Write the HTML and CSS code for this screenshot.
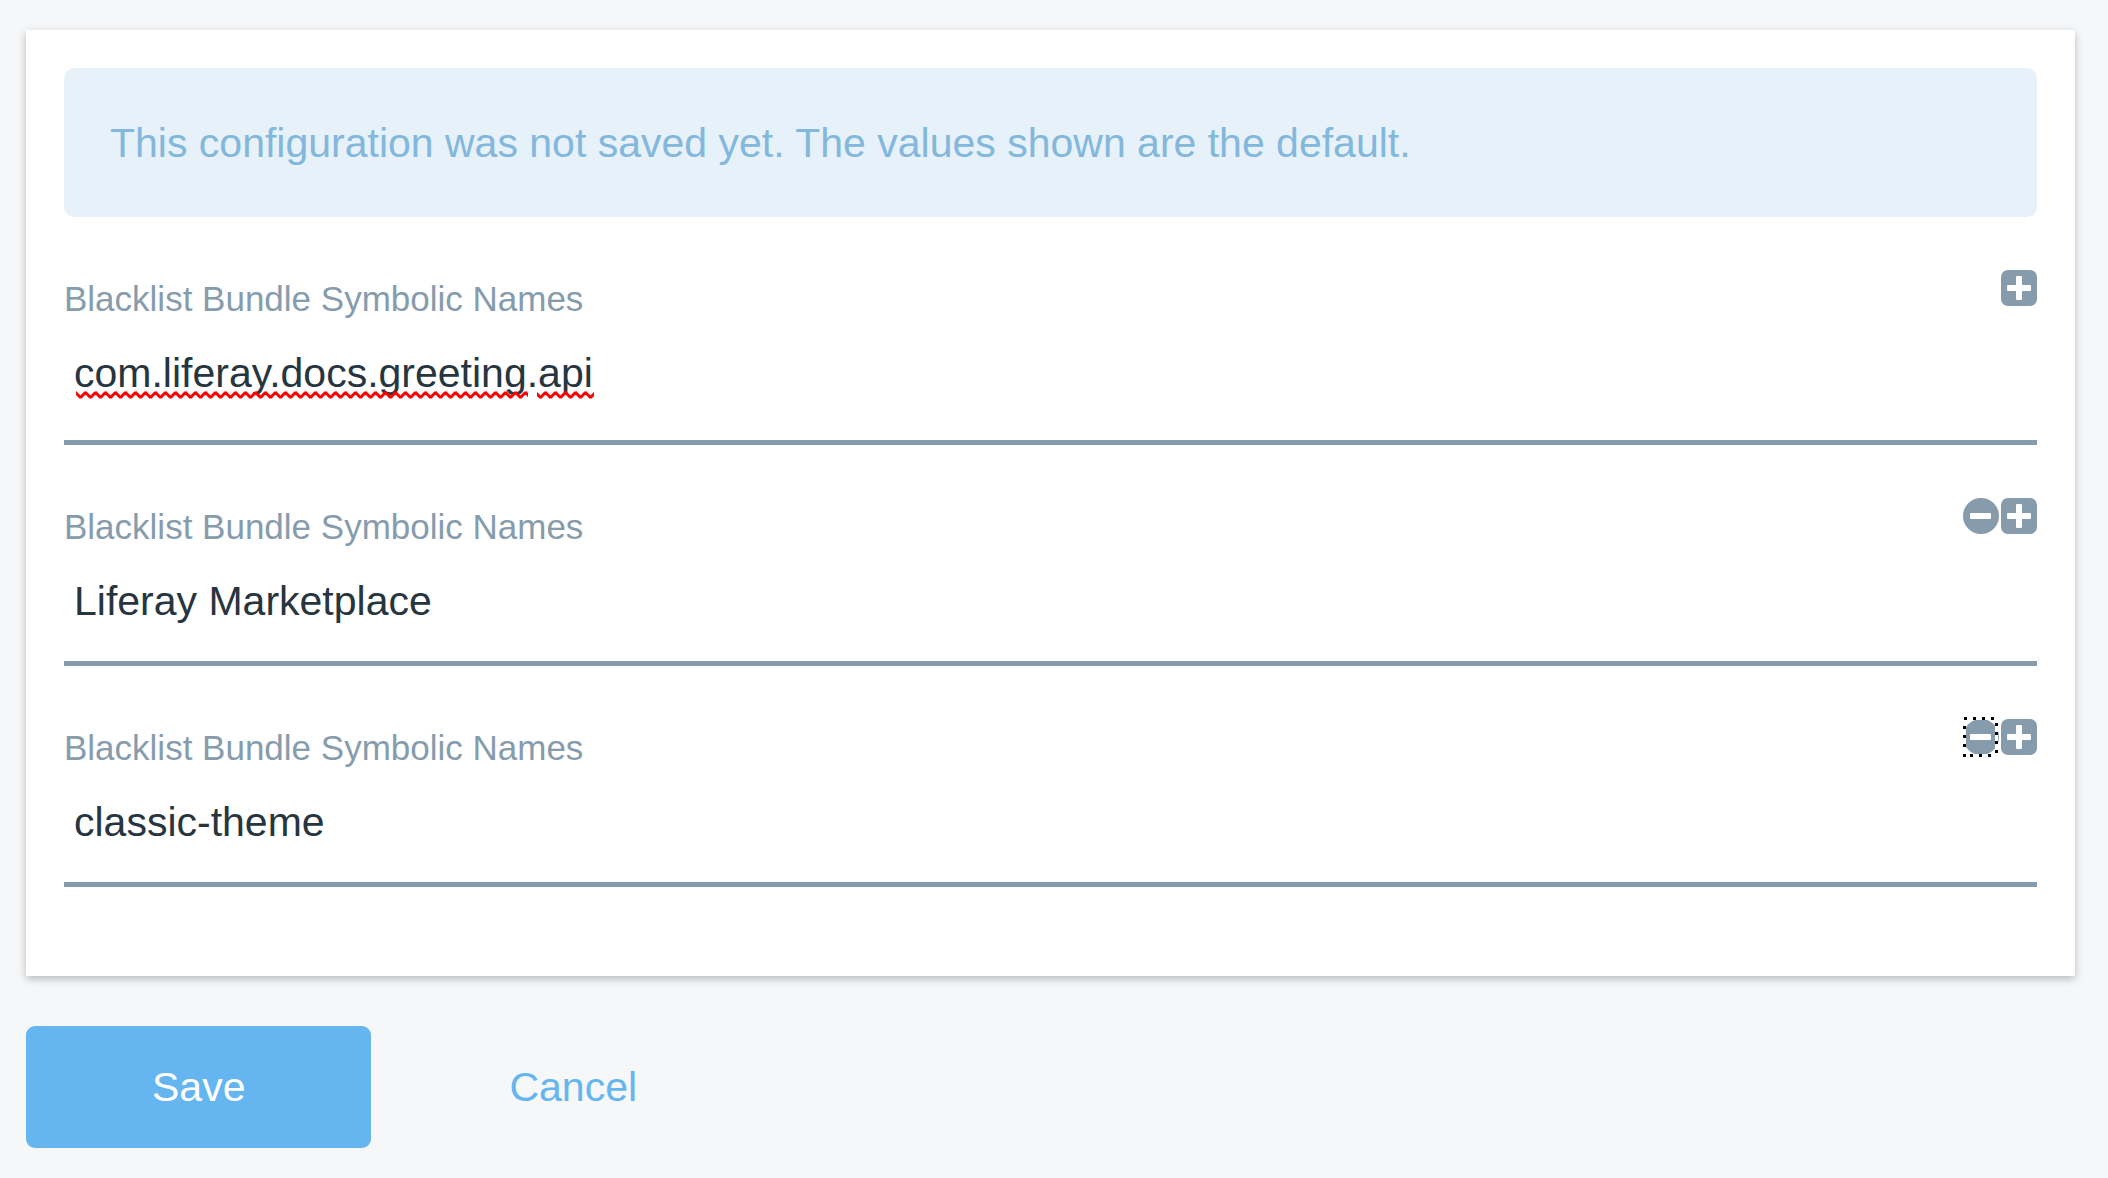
FILE: index.html
```html
<!DOCTYPE html>
<html lang="en">
<head>
<meta charset="utf-8">
<meta name="viewport" content="width=device-width, initial-scale=1">
<title>Bundle Blacklist</title>
<link rel="stylesheet" href="styles.css">
</head>
<body>
<svg class="defs" aria-hidden="true">
  <symbol id="plus" viewBox="0 0 36 36">
    <rect width="36" height="36" rx="7"/>
    <path class="sign" d="M16 6h4q1 0 1 1v8h8q1 0 1 1v4q0 1-1 1h-8v8q0 1-1 1h-4q-1 0-1-1v-8H7q-1 0-1-1v-4q0-1 1-1h8V7q0-1 1-1z"/>
  </symbol>
  <symbol id="minus" viewBox="0 0 36 36">
    <circle cx="18" cy="18" r="18"/>
    <rect class="sign" x="7" y="15" width="21" height="6" rx="1"/>
  </symbol>
</svg>
<form class="config">
  <section class="card">
    <p class="alert">This configuration was not saved yet. The values shown are the default.</p>

    <div class="field field-tall">
      <div class="field-head">
        <label for="name-0">Blacklist Bundle Symbolic Names</label>
        <div class="tools">
          <button type="button" class="tool" aria-label="Add"><svg><use href="#plus"/></svg></button>
        </div>
      </div>
      <div class="entry">
        <input id="name-0" type="text" value="com.liferay.docs.greeting.api" spellcheck="false">
        <svg class="spelling" aria-hidden="true">
          <defs>
            <pattern id="wave" width="10" height="8" patternUnits="userSpaceOnUse">
              <path d="M-1 1L0 2L4 6H5L9 2H10L11 3"/>
            </pattern>
          </defs>
          <rect width="452" height="8"/>
          <rect x="461" width="57" height="8"/>
        </svg>
      </div>
    </div>

    <div class="field">
      <div class="field-head">
        <label for="name-1">Blacklist Bundle Symbolic Names</label>
        <div class="tools">
          <button type="button" class="tool" aria-label="Remove"><svg><use href="#minus"/></svg></button>
          <button type="button" class="tool" aria-label="Add"><svg><use href="#plus"/></svg></button>
        </div>
      </div>
      <div class="entry">
        <input id="name-1" type="text" value="Liferay Marketplace" spellcheck="false">
      </div>
    </div>

    <div class="field">
      <div class="field-head">
        <label for="name-2">Blacklist Bundle Symbolic Names</label>
        <div class="tools">
          <button type="button" class="tool" aria-label="Remove">
            <svg><use href="#minus"/></svg>
            <svg class="focus-ring" viewBox="0 0 36 40" aria-hidden="true">
              <rect class="ring-base" x="1.5" y="1.5" width="32" height="37"/>
              <path class="ring-dots" d="M1 1.5H34M33.5 6V36M28 38.500H0M1.500 30V3"/>
              <path class="ring-corner" d="M0 37h3v3H0z"/>
            </svg>
          </button>
          <button type="button" class="tool" aria-label="Add"><svg><use href="#plus"/></svg></button>
        </div>
      </div>
      <div class="entry">
        <input id="name-2" type="text" value="classic-theme" spellcheck="false">
      </div>
    </div>
  </section>

  <div class="actions">
    <button type="submit" class="btn btn-primary">Save</button>
    <a class="btn btn-link" href="#">Cancel</a>
  </div>
</form>
</body>
</html>
```
FILE: styles.css
```css
* {
  box-sizing: border-box;
}

body {
  margin: 0;
  background: #f5f7f9;
  font-family: "Liberation Sans", Arial, sans-serif;
  font-size: 41px;
  line-height: 60px;
  color: #27353f;
}

.defs {
  position: absolute;
  width: 0;
  height: 0;
}

.config {
  padding: 30px 33px 30px 26px;
}

.card {
  padding: 38px 38px 89px;
  background: #fff;
  box-shadow: 0 3px 8px rgba(0, 0, 0, 0.25);
}

.alert {
  margin: 0;
  padding: 45px 46px 44px;
  border-radius: 10px;
  background: #e6f1fa;
  color: #83b8dc;
}

.field {
  margin-top: 57px;
}

.field-head {
  display: flex;
  justify-content: space-between;
  align-items: flex-start;
}

.field-head label {
  font-size: 35px;
  line-height: 50px;
  color: #869cad;
}

.tools {
  display: flex;
  gap: 2px;
  margin: -4px 0 0;
}

.tool {
  position: relative;
  width: 36px;
  height: 36px;
  padding: 0;
  border: 0;
  background: none;
  fill: #869cad;
  cursor: pointer;
}

.tool svg {
  display: block;
  width: 36px;
  height: 36px;
}

.tool .sign,
.sign {
  fill: #fff;
}

.tool .focus-ring {
  position: absolute;
  top: -2px;
  left: 0;
  height: 40px;
  fill: none;
  stroke-width: 3;
}

.ring-base {
  stroke: #fff;
}

.ring-dots {
  stroke: #000;
  stroke-dasharray: 3 6;
}

.ring-corner {
  fill: #000;
}

.entry {
  position: relative;
}

.entry input {
  display: block;
  width: 100%;
  height: 114px;
  padding: 19px 10px 30px;
  border: 0;
  border-bottom: 5px solid #869cad;
  border-radius: 0;
  outline: 0;
  background: none;
  font: inherit;
  color: inherit;
}

.field-tall input {
  height: 121px;
  padding-bottom: 37px;
}

.spelling {
  position: absolute;
  top: 67px;
  left: 12px;
  width: 520px;
  height: 8px;
  fill: url(#wave);
  pointer-events: none;
}

.spelling path {
  fill: none;
  stroke: #f00;
  stroke-width: 3;
}

.actions {
  display: flex;
  gap: 12px;
  margin-top: 50px;
}

.btn {
  padding: 31px 126px;
  border: 0;
  border-radius: 9px;
  font: inherit;
  text-decoration: none;
  cursor: pointer;
}

.btn-primary {
  background: #65b6f0;
  color: #fff;
}

.btn-link {
  color: #65b6f0;
}
```
